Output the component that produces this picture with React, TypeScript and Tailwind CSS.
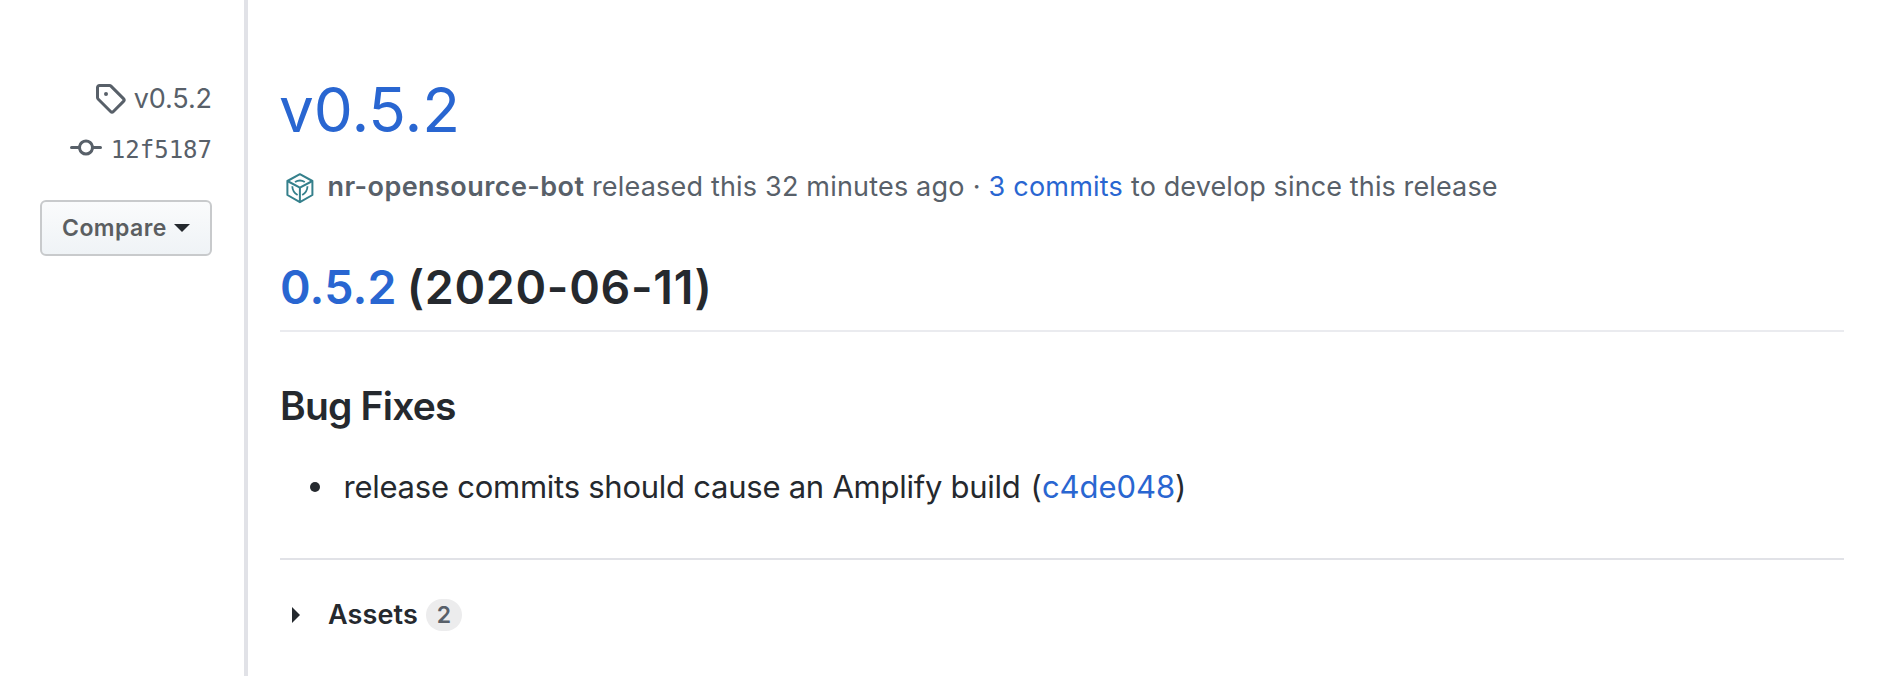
function TagIcon() {
  return (
    <svg viewBox="0 0 16 16" className="size-8 shrink-0" fill="currentColor">
      <path
        fillRule="evenodd"
        d="M2.5 7.775V2.75a.25.25 0 01.25-.25h5.025a.25.25 0 01.177.073l6.25 6.25a.25.25 0 010 .354l-5.025 5.025a.25.25 0 01-.354 0l-6.25-6.25a.25.25 0 01-.073-.177zm-1.5 0V2.75C1 1.784 1.784 1 2.75 1h5.025c.464 0 .91.184 1.238.513l6.25 6.25a1.75 1.75 0 010 2.474l-5.026 5.026a1.75 1.75 0 01-2.474 0l-6.25-6.25A1.75 1.75 0 011 7.775zM6 5a1 1 0 100 2 1 1 0 000-2z"
      />
    </svg>
  );
}

function CommitIcon() {
  return (
    <svg viewBox="0 0 16 16" className="size-8 shrink-0" fill="currentColor">
      <path
        fillRule="evenodd"
        d="M10.5 7.75a2.5 2.5 0 11-5 0 2.5 2.5 0 015 0zm1.43.75a4.002 4.002 0 01-7.86 0H.75a.75.75 0 110-1.5h3.32a4.001 4.001 0 017.86 0h3.32a.75.75 0 110 1.5h-3.32z"
      />
    </svg>
  );
}

function BotAvatar() {
  return (
    <svg viewBox="0 0 40 40" className="size-10 shrink-0" fill="none" stroke="#35808c" strokeLinejoin="round">
      <path strokeWidth="2" d="M19.9 7.2 32.4 14v14l-12.5 7.2L7.4 28V14z" />
      <path strokeWidth="2" d="M7.4 14l12.5 6.6L32.4 14M19.900 20.600v14.600" />
      <path strokeWidth="1.8" d="M15 15.100Q19.900 11.900 24.800 15.100M12.300 19.200q.2 5.800 5.300 8.900M27.500 19.200q-.2 5.800-5.300 8.900" />
    </svg>
  );
}

function Sidebar() {
  return (
    <aside className="flex h-[676px] w-[248px] shrink-0 flex-col items-end border-r-4 border-[#e1e2e7] pr-8 pt-[82px] text-[#586069]">
      <a className="flex h-8 items-center gap-2">
        <TagIcon />
        <span className="pt-0.5 text-[27px] leading-8 tracking-[-0.1px]">v0.5.2</span>
      </a>
      <a className="mt-[18px] flex h-8 items-center gap-[9px]">
        <CommitIcon />
        <span className="pt-[3px] font-['DejaVu_Sans_Mono',monospace] text-[24px] leading-8">12f5187</span>
      </a>
      <button className="mt-9 flex h-14 w-[172px] items-center rounded-md border-2 border-[#c8cacc] bg-gradient-to-b from-[#fafbfc] to-[#eff3f6] pl-5 font-semibold">
        <span className="text-[23px] leading-[52px] tracking-[0.45px] text-[#5b5e61]">Compare</span>
        <svg viewBox="0 0 16 8" className="ml-[7px] h-2 w-4" fill="#24292e">
          <path d="M0 0h16L8 8z" />
        </svg>
      </button>
    </aside>
  );
}

export default function App() {
  return (
    <div className="flex h-[676px] overflow-hidden bg-white font-['Inter',sans-serif] text-[#25292e]">
      <Sidebar />
      <main className="flex w-[1596px] flex-col whitespace-nowrap pt-[70px] pl-8">
        <h1 className="-ml-px h-20 text-[62px] leading-20 text-[#2966d1]">v0.5.2</h1>
        <div className="mt-[17px] flex h-10 items-center text-[27px] leading-10 text-[#586069]">
          <BotAvatar />
          <span className="ml-[7.5px] font-semibold tracking-[0.43px]">nr-opensource-bot</span>
          <span className="ml-[7.5px] tracking-[0.19px]">released this 32 minutes ago</span>
          <span className="w-6 text-center">·</span>
          <a className="tracking-[0.2px] text-[#2966d1]">3 commits</a>
          <span className="ml-2 tracking-[0.12px]">to develop since this release</span>
        </div>
        <h2 className="mt-[50px] flex h-[75px] border-b-2 border-[#eaebef] text-[46.5px] leading-[60px] font-semibold">
          <a className="tracking-[0.2px] text-[#2966d1]">0.5.2</a>
          <span className="ml-2.5 tracking-[0.7px]">(2020-06-11)</span>
        </h2>
        <h3 className="mt-[47px] h-[54px] text-[39px] leading-[54px] font-semibold tracking-[-0.8px]">Bug Fixes</h3>
        <ul className="mt-[30px] flex h-12 items-center text-[31px] leading-12">
          <li className="flex items-center">
            <span className="ml-[30px] size-2.5 rounded-full bg-[#25292e]" />
            <span className="ml-[23.5px] tracking-[-0.25px]">release commits should cause an Amplify build</span>
            <span className="ml-2.5">(</span>
            <a className="tracking-[-0.05px] text-[#2966d1]">c4de048</a>
            <span>)</span>
          </li>
        </ul>
        <div className="mt-[47px] flex items-center border-t-2 border-[#e1e2e7] pt-[34px]">
          <svg viewBox="0 0 8 16" className="ml-3 h-4 w-2" fill="#24292e">
            <path d="M0 0v16l8-8z" />
          </svg>
          <span className="ml-7 pt-px text-[27px] leading-10 font-semibold tracking-[0.1px]">Assets</span>
          <span className="ml-2 flex h-8 w-9 items-center justify-center rounded-full bg-[#ececed] text-[23px] leading-8 font-semibold text-[#586069]">
            2
          </span>
        </div>
      </main>
    </div>
  );
}
